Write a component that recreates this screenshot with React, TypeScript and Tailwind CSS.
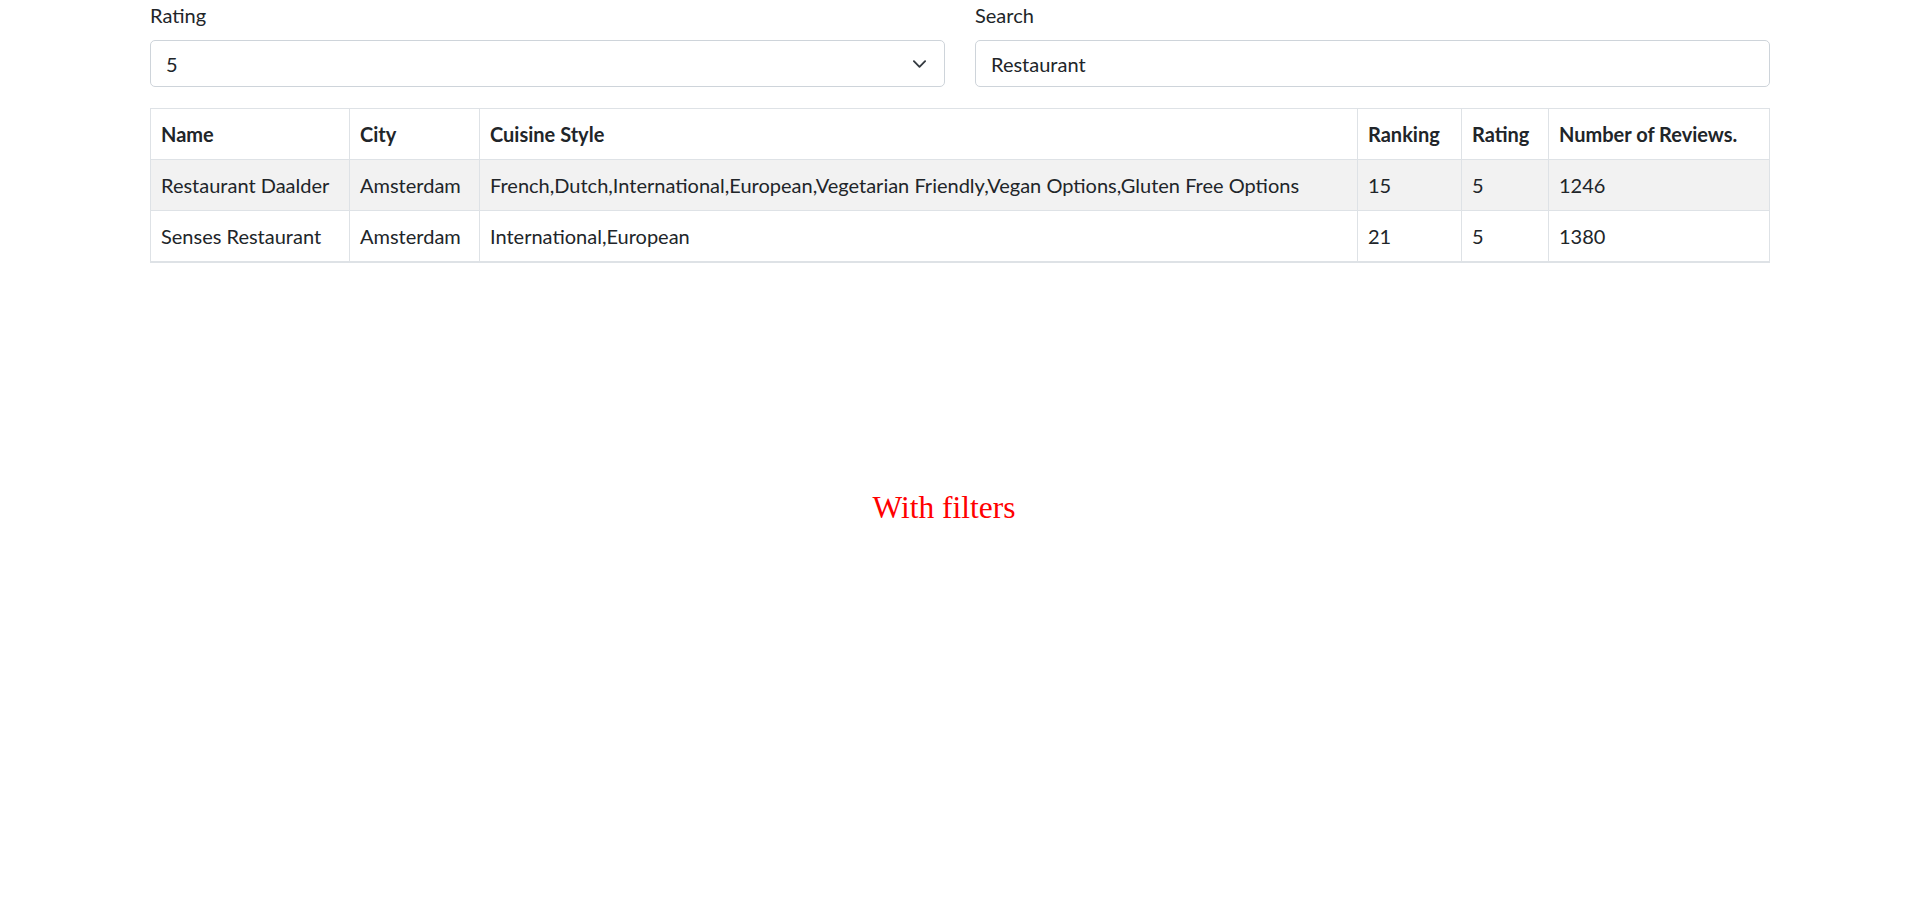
import React from 'react';

const rows = [
  {
    name: 'Restaurant Daalder',
    city: 'Amsterdam',
    cuisine: 'French,Dutch,International,European,Vegetarian Friendly,Vegan Options,Gluten Free Options',
    ranking: 15,
    rating: 5,
    reviews: 1246,
  },
  {
    name: 'Senses Restaurant',
    city: 'Amsterdam',
    cuisine: 'International,European',
    ranking: 21,
    rating: 5,
    reviews: 1380,
  },
];

const font = { fontFamily: '"Segoe UI", Lato, "Noto Sans", sans-serif' };

const App = () => {
  return (
    <div className="min-h-screen bg-white text-[#212529] text-[20px] leading-[30px]" style={font}>
      <div className="w-[1620px] mx-auto">
        <div className="grid grid-cols-2 gap-x-[30px]">
          <div>
            <label className="block mb-[10px]">Rating</label>
            <div className="relative h-[47px] border border-[#ced4da] rounded-[5px] flex items-center px-[15px] pt-[1px]">
              <span>5</span>
              <svg
                className="absolute right-[17px] top-1/2 -translate-y-1/2"
                width="15"
                height="15"
                viewBox="0 0 16 16"
                fill="none"
                stroke="#343a40"
                strokeWidth="2"
                strokeLinecap="round"
                strokeLinejoin="round"
              >
                <path d="m2 5 6 6 6-6" />
              </svg>
            </div>
          </div>
          <div>
            <label className="block mb-[10px]">Search</label>
            <div className="h-[47px] border border-[#ced4da] rounded-[5px] flex items-center px-[15px] pt-[1px]">
              <span>Restaurant</span>
            </div>
          </div>
        </div>

        <table className="w-full table-fixed border-collapse mt-[21px]">
          <colgroup>
            <col className="w-[199px]" />
            <col className="w-[130px]" />
            <col className="w-[878px]" />
            <col className="w-[104px]" />
            <col className="w-[87px]" />
            <col />
          </colgroup>
          <thead>
            <tr>
              {['Name', 'City', 'Cuisine Style', 'Ranking', 'Rating', 'Number of Reviews.'].map((h) => (
                <th key={h} className="border border-[#dee2e6] p-[10px] text-left font-bold whitespace-nowrap">
                  {h}
                </th>
              ))}
            </tr>
          </thead>
          <tbody>
            {rows.map((r, i) => (
              <tr key={r.name} className={i % 2 === 0 ? 'bg-[#f2f2f2]' : 'bg-white'}>
                {[r.name, r.city, r.cuisine, r.ranking, r.rating, r.reviews].map((v, j) => (
                  <td
                    key={j}
                    className={
                      'border border-[#dee2e6] p-[10px] whitespace-nowrap ' +
                      (i === rows.length - 1 ? 'border-b-2' : '')
                    }
                  >
                    {v}
                  </td>
                ))}
              </tr>
            ))}
          </tbody>
        </table>

        <div className="mt-[229px] pr-[32px] text-center">
          <span className="text-[31.5px] leading-none text-[#ff0000]" style={{ fontFamily: '"Liberation Serif", serif' }}>
            With filters
          </span>
        </div>
      </div>
    </div>
  );
};

export default App;
